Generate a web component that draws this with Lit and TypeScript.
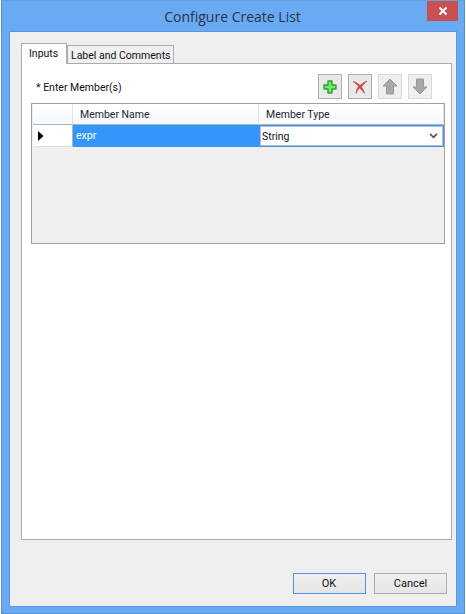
import { LitElement, html, css } from "lit";
import { customElement } from "lit/decorators.js";

@customElement("app-root")
export class AppRoot extends LitElement {
  static styles = css`
    :host { display: block; width: 466px; height: 614px; background: #fff; font-family: Roboto, "Liberation Sans", Arial, sans-serif; font-size: 10.5px; color: #111; overflow: hidden; }
    * { box-sizing: border-box; }
    .win { margin-left: 1px; width: 464px; height: 614px; background: #69aaf5; border: 1px solid #5b8ec9; border-top-color: #6a9fdc; display: flex; flex-direction: column; padding: 0 7px 6px 7px; }
    .title { height: 30px; flex: none; position: relative; display: flex; align-items: center; justify-content: center; }
    .title span { font-family: "Open Sans", sans-serif; font-size: 14px; color: #2a3442; padding-top: 1px; padding-right: 1px; }
    .close { position: absolute; right: -1px; top: 0; width: 31px; height: 20px; background: #c75050; display: flex; align-items: center; justify-content: center; }
    .client { flex: 1; background: #efefef; border: 1px solid #5b94dc; padding: 11px 4px 0 11px; display: flex; flex-direction: column; min-height: 0; }
    .tabs { display: flex; align-items: flex-end; height: 20px; flex: none; position: relative; z-index: 1; }
    .tab { border: 1px solid #adadad; border-bottom: none; background: #f0f0f0; height: 18px; display: flex; align-items: center; padding: 1px 3px 0 3px; width: 107px; white-space: nowrap; }
    .tab.active { background: #fff; height: 21px; width: 46px; margin-bottom: -1px; padding: 0 0 2px 7px; }
    .panel { width: 431px; height: 477px; flex: none; background: #fff; border: 1px solid #adadad; padding: 10px 6px 0 9px; }
    .toolbar { display: flex; align-items: center; height: 25px; padding-right: 13px; gap: 6px; margin-bottom: 4px; }
    .label { flex: 1; padding-left: 5px; padding-top: 2px; }
    .tb { width: 24px; height: 25px; background: #e9e9e9; border: 1px solid #adadad; display: flex; align-items: center; justify-content: center; }
    .tb.off { border-color: #d9d9d9; background: #efefef; }
    .grid { width: 414px; height: 141px; background: #efefef; border: 1px solid #a0a0a0; border-left-color: #a0a0a8; padding-left: 1px; }
    .row { display: grid; grid-template-columns: 40px 186px 185px; }
    .head { height: 21px; }
    .head div { background: linear-gradient(#fff, #f6f8fb); border-right: 1px solid #dfe3e8; border-bottom: 1px solid #a8b4c0; padding: 4px 0 0 7px; color: #1b2536; }
    .body { height: 22px; }
    .rh { background: #fff; border-right: 1px solid #a8b4c0; border-bottom: 1px solid #dfe3e8; display: flex; align-items: center; padding-left: 5px; }
    .name { background: #3296fa; color: #fff; padding: 4px 0 0 3px; }
    .type { background: #fff; border: 1px solid #5a8fd0; box-shadow: inset 0 0 0 1px #9cc3ee; display: flex; align-items: center; justify-content: space-between; padding: 0 5px 0 2px; }
    .footer { height: 67px; flex: none; display: flex; justify-content: flex-end; gap: 8px; padding: 33px 5px 0 0; }
    .btn { width: 73px; height: 21px; border: 1px solid #adadad; background: linear-gradient(#f0f0f0, #e5e5e5); display: flex; align-items: center; justify-content: center; color: #111; font-size: 11px; }
    .btn.default { border-color: #4a96ea; padding-right: 1px; }
  `;

  render() {
    return html`
      <div class="win">
        <div class="title">
          <span>Configure Create List</span>
          <div class="close">
            <svg width="10" height="10" viewBox="0 0 10 10"><path d="M1.5 1.5l7 7M8.5 1.5l-7 7" stroke="#fff" stroke-width="2" fill="none"/></svg>
          </div>
        </div>
        <div class="client">
          <div class="tabs">
            <div class="tab active">Inputs</div>
            <div class="tab">Label and Comments</div>
          </div>
          <div class="panel">
            <div class="toolbar">
              <div class="label">* Enter Member(s)</div>
              <div class="tb">
                <svg width="14" height="14" viewBox="0 0 14 14"><path d="M5 1h4v4h4v4H9v4H5V9H1V5h4z" fill="#7ee07e" stroke="#20a820" stroke-width="1.4" stroke-linejoin="round"/></svg>
              </div>
              <div class="tb">
                <svg width="16" height="14" viewBox="0 0 16 14"><path d="M1 1.500C4 2 6 3.500 8 5.500 10 3.500 12 2 15 1 12.500 3.500 10.500 5.500 9.500 7 11 9 12 11 12.500 13.500 11 11.500 9.500 9.500 7.500 8 6 9.500 5 11.500 4 13.500 4 11 5 8.500 6.500 6.500 5 4.500 3 3 1 1.500Z" fill="#e04040" stroke="#c05050" stroke-width=".6"/></svg>
              </div>
              <div class="tb off">
                <svg width="16" height="17" viewBox="0 0 16 17"><path d="M8 1l7 7h-3.500v8h-7V8H1z" fill="#a8a8a8" stroke="#999" stroke-width="1"/></svg>
              </div>
              <div class="tb off">
                <svg width="16" height="17" viewBox="0 0 16 17"><path d="M8 16l7-7h-3.500V1h-7v8H1z" fill="#a8a8a8" stroke="#999" stroke-width="1"/></svg>
              </div>
            </div>
            <div class="grid">
              <div class="row head">
                <div></div>
                <div>Member Name</div>
                <div>Member Type</div>
              </div>
              <div class="row body">
                <div class="rh">
                  <svg width="6" height="10" viewBox="0 0 6 10"><path d="M0 0l5.500 5L0 10z" fill="#000"/></svg>
                </div>
                <div class="name">expr</div>
                <div class="type">
                  <span>String</span>
                  <svg width="9" height="6" viewBox="0 0 10 7"><path d="M1 1l4 4 4-4" stroke="#555" stroke-width="2" fill="none"/></svg>
                </div>
              </div>
            </div>
          </div>
          <div class="footer">
            <div class="btn default">OK</div>
            <div class="btn">Cancel</div>
          </div>
        </div>
      </div>
    `;
  }
}
